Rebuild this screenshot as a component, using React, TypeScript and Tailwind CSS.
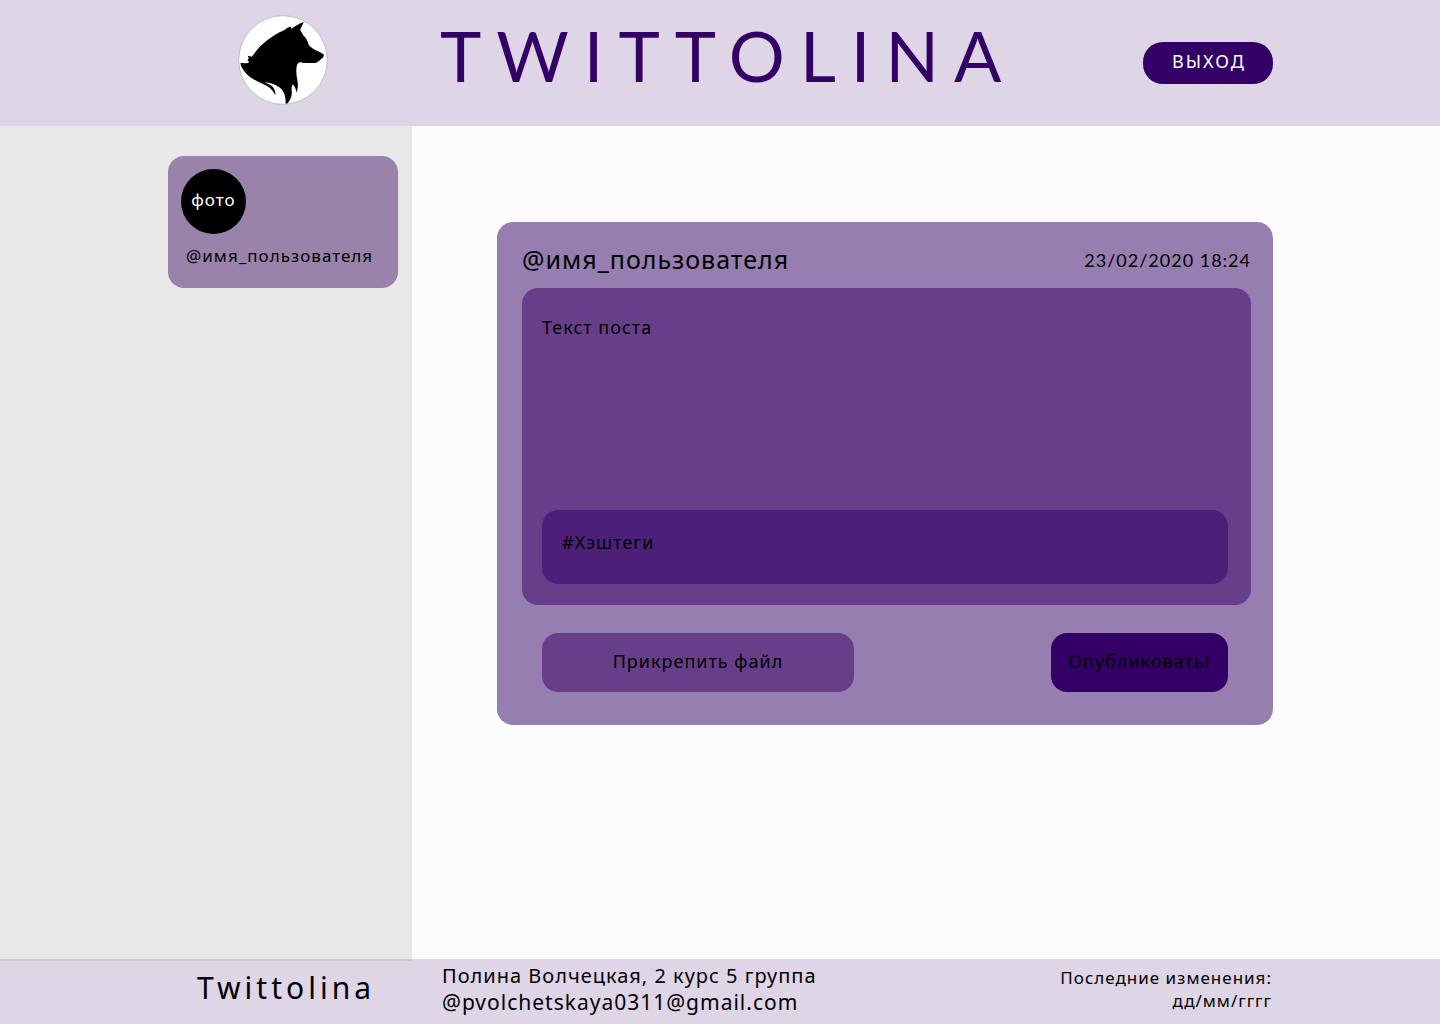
function WolfLogo() {
  return (
    <svg viewBox="27 31 268 268" className="size-[90px]" role="img" aria-label="Twittolina">
      <circle cx="161" cy="165" r="132" fill="#fff" stroke="#b9b2c2" strokeWidth="2.5" />
      <path
        fill="#000"
        d="M223 52 L210 57 L191 68 L187 72 L183 65 L173 70 L166 76 C145 84 126 97 112 108 C98 119 84 133 74 148 L68 155 L56 152 L59 160 L55 166 L61 171 L54 175 L34 174 C36 185 40 190 45 198 C54 211 67 219 81 227 C96 235 108 238 120 247 C128 253 134 261 138 270 C140 258 133 244 122 239 L106 231 C125 232 141 238 152 248 C164 258 169 271 169 295 L175 294 C185 281 188 270 187 258 C186 248 187 242 191 238 C197 245 200 253 201 262 C207 248 206 232 202 215 C200 200 200 188 203 179 C207 172 212 170 219 173 C233 174 247 175 261 173 C266 170 270 166 275 162 C281 158 283 154 282 148 C275 143 266 139 257 135 C248 131 242 126 237 119 C235 108 228 97 221 91 L212 75 Z"
      />
    </svg>
  );
}

export default function App() {
  return (
    <div
      className="flex min-h-screen flex-col bg-[#fcfcfc] text-lg tracking-[1px] text-black"
      style={{ fontFamily: '"Noto Sans", sans-serif' }}
    >
      <header className="flex h-[126px] items-center bg-[#ded5e6]">
        <div className="flex w-[412px] shrink-0 justify-end pr-[84px] pb-1.5">
          <WolfLogo />
        </div>
        <div className="flex flex-1 items-center justify-between pr-[167px] pl-7">
          <h1 className="pb-4 font-['Lato'] text-[70px] leading-[96px] tracking-[15px] text-[#330066]">TWITTOLINA</h1>
          <button type="button" className="h-[42px] w-[130px] rounded-[20px] bg-[#330066] pb-1 pl-0.5 tracking-[2px] text-white">
            ВЫХОД
          </button>
        </div>
      </header>

      <div className="flex flex-1">
        <aside className="flex w-[412px] shrink-0 items-start justify-end bg-[#e8e8e8] pt-[30px] pr-3.5">
          <section className="h-[132px] w-[230px] rounded-2xl bg-[#9983ab] pt-[13px] pl-[13px]">
            <div className="flex size-[65px] items-center justify-center rounded-full bg-black pb-0.5 text-[17px] text-white">
              фото
            </div>
            <p className="mt-2.5 pl-[5px] text-[17px] leading-6">@имя_пользователя</p>
          </section>
        </aside>

        <main className="flex-1 pt-24 pr-[167px] pl-[85px]">
          <form className="rounded-2xl bg-[#967eb0] pt-3 pr-[22px] pb-[33px] pl-[25px]" onSubmit={(e) => e.preventDefault()}>
            <div className="flex h-[54px] items-center justify-between pb-0.5">
              <h2 className="pb-0.5 text-[25px]">@имя_пользователя</h2>
              <time dateTime="2020-02-23T18:24" className="font-['Lato']">
                23/02/2020 18:24
              </time>
            </div>
            <div className="rounded-2xl bg-[#673e8a] pt-[25px] pr-[23px] pb-[21px] pl-5">
              <textarea
                aria-label="Текст поста"
                placeholder="Текст поста"
                className="block h-[197px] w-full resize-none bg-transparent leading-7 tracking-[1px] outline-none placeholder:text-black"
              />
              <input
                type="text"
                aria-label="Хэштеги"
                placeholder="#Хэштеги"
                className="block h-[74px] w-full rounded-2xl bg-[#4c1f78] px-5 pb-2.5 tracking-[1px] outline-none placeholder:text-black"
              />
            </div>
            <div className="mt-7 flex justify-between pr-[23px] pl-5">
              <button type="button" className="h-[59px] w-[312px] rounded-2xl bg-[#673e8a] pb-1">
                Прикрепить файл
              </button>
              <button type="submit" className="h-[59px] w-[177px] rounded-2xl bg-[#330066] pb-1">
                Опубликовать!
              </button>
            </div>
          </form>
        </main>
      </div>

      <footer className="flex h-[65px] bg-[#ded5e6]">
        <div className="flex w-[412px] shrink-0 justify-end border-t-2 border-[#cfc8d4] pr-[37px]">
          <p className="text-[30px] leading-[54px] tracking-[4px]">Twittolina</p>
        </div>
        <div className="flex flex-1 justify-between pr-[168px] pl-[30px]">
          <address className="pt-[3px] text-xl leading-[27px] not-italic">
            Полина Волчецкая, 2 курс 5 группа
            <br />
            <a href="mailto:pvolchetskaya0311@gmail.com" className="text-[21px]">
              @pvolchetskaya0311@gmail.com
            </a>
          </address>
          <p className="pt-[7px] text-right text-[17px] leading-[23px]">
            Последние изменения:
            <br />
            дд/мм/гггг
          </p>
        </div>
      </footer>
    </div>
  );
}
